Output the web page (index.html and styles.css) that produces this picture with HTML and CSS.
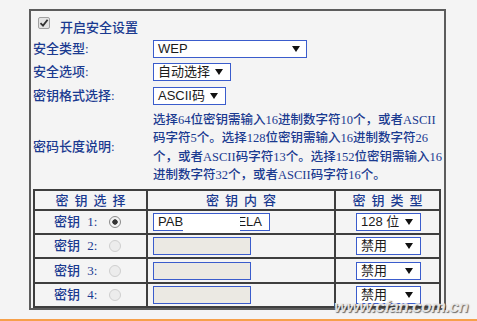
FILE: index.html
```html
<!DOCTYPE html>
<html lang="zh-CN">
<head>
<meta charset="utf-8">
<title>无线安全设置</title>
<link rel="stylesheet" href="styles.css">
</head>
<body>
<div class="frame">
  <div class="enable-row">
    <span class="checkbox"><svg width="10" height="10" viewBox="0 0 10 10"><path d="M1.5 5.2 L4 7.6 L8.6 1.8" fill="none" stroke="#333" stroke-width="1.8"/></svg></span>
    <span class="enable-label">开启安全设置</span>
  </div>
  <div class="form">
    <div class="label">安全类型:</div>
    <div class="value"><div class="select sel-type"><span>WEP</span><svg class="arrow" width="8" height="6" viewBox="0 0 8 6"><path d="M0 0 H8 L4 6 Z" fill="#111"/></svg></div></div>
    <div class="label">安全选项:</div>
    <div class="value"><div class="select sel-auto"><span>自动选择</span><svg class="arrow" width="8" height="6" viewBox="0 0 8 6"><path d="M0 0 H8 L4 6 Z" fill="#111"/></svg></div></div>
    <div class="label">密钥格式选择:</div>
    <div class="value"><div class="select sel-fmt"><span>ASCII码</span><svg class="arrow" width="8" height="6" viewBox="0 0 8 6"><path d="M0 0 H8 L4 6 Z" fill="#111"/></svg></div></div>
    <div class="label">密码长度说明:</div>
    <div class="value desc">选择64位密钥需输入16进制数字符10个，或者ASCII<br>码字符5个。选择128位密钥需输入16进制数字符26<br>个，或者ASCII码字符13个。选择152位密钥需输入16<br>进制数字符32个，或者ASCII码字符16个。</div>
  </div>
  <table class="keys">
    <tr class="head">
      <th class="c1">密 钥 选 择</th>
      <th class="c2">密 钥 内 容</th>
      <th class="c3">密 钥 类 型</th>
    </tr>
    <tr class="r">
      <td><div class="sel"><span class="kname">密钥 1:</span><span class="radio on"></span></div></td>
      <td><div class="key-input"><span>PAB</span><span>ELA</span><span class="mask"></span></div></td>
      <td><div class="select sel-kt"><span>128 位</span><svg class="arrow" width="8" height="6" viewBox="0 0 8 6"><path d="M0 0 H8 L4 6 Z" fill="#111"/></svg></div></td>
    </tr>
    <tr class="r">
      <td><div class="sel"><span class="kname">密钥 2:</span><span class="radio"></span></div></td>
      <td><div class="key-input off"></div></td>
      <td><div class="select sel-kt"><span>禁用</span><svg class="arrow" width="8" height="6" viewBox="0 0 8 6"><path d="M0 0 H8 L4 6 Z" fill="#111"/></svg></div></td>
    </tr>
    <tr class="r r3">
      <td><div class="sel"><span class="kname">密钥 3:</span><span class="radio"></span></div></td>
      <td><div class="key-input off"></div></td>
      <td><div class="select sel-kt"><span>禁用</span><svg class="arrow" width="8" height="6" viewBox="0 0 8 6"><path d="M0 0 H8 L4 6 Z" fill="#111"/></svg></div></td>
    </tr>
    <tr class="r">
      <td><div class="sel"><span class="kname">密钥 4:</span><span class="radio"></span></div></td>
      <td><div class="key-input off"></div></td>
      <td><div class="select sel-kt"><span>禁用</span><svg class="arrow" width="8" height="6" viewBox="0 0 8 6"><path d="M0 0 H8 L4 6 Z" fill="#111"/></svg></div></td>
    </tr>
  </table>
</div>
<div class="orange"></div>
<div class="watermark">www.cfan.com.cn</div>
</body>
</html>
```
FILE: styles.css
```css
* { box-sizing: border-box; }
html, body { margin: 0; padding: 0; }
body {
  width: 477px;
  height: 321px;
  background: #f4f4f4;
  font-family: "Liberation Serif", "Noto Sans CJK SC", serif;
  font-size: 13px;
  font-weight: 500;
  color: #1a3a90;
  position: relative;
  overflow: hidden;
}
.frame {
  margin: 9px 0 0 29px;
  width: 417px;
  height: 301px;
  border: 2px solid #5c5c5c;
  display: flex;
  flex-direction: column;
}
.enable-row {
  height: 26px;
  display: flex;
  align-items: flex-start;
  padding-left: 7px;
}
.checkbox {
  margin-top: 6px;
  width: 12px;
  height: 12px;
  border: 1px solid #a0a0a0;
  border-radius: 2px;
  background: #e4e4e4;
  display: flex;
  align-items: center;
  justify-content: center;
}
.enable-label {
  margin-top: 8px;
  margin-left: 10px;
  line-height: 16px;
  font-family: "Noto Sans CJK SC", sans-serif;
}
.form {
  display: grid;
  grid-template-columns: 120px 1fr;
  grid-template-rows: 23px 24px 23px 79px;
  align-items: center;
  padding-left: 2px;
}
.label { line-height: 16px; white-space: nowrap; }
.value { display: flex; align-items: center; }
.select {
  height: 18px;
  border: 1px solid #3a5ccc;
  background: #fff;
  display: flex;
  align-items: center;
  justify-content: space-between;
  padding: 0 7px 0 4px;
  font-family: "Liberation Sans", "Noto Sans CJK SC", sans-serif;
  font-size: 13px;
  font-weight: normal;
  color: #1a1a1a;
  line-height: 16px;
}
.arrow { flex: none; }
.sel-type { width: 154px; padding-right: 6px; }
.sel-auto { width: 78px; }
.sel-fmt { width: 73px; }
.desc {
  display: block;
  font-size: 12.5px;
  line-height: 18.5px;
  white-space: nowrap;
  padding-top: 2px;
}
.keys {
  margin: 3px 0 0 2px;
  width: 408px;
  border-collapse: separate;
  border-spacing: 0;
  border-top: 2px solid #3e3e3e;
  border-left: 2px solid #3e3e3e;
  table-layout: fixed;
}
.keys th, .keys td {
  border-right: 2px solid #3e3e3e;
  border-bottom: 2px solid #3e3e3e;
  padding: 0;
  font-weight: 500;
  vertical-align: middle;
}
.keys th {
  height: 20px;
  text-align: center;
  word-spacing: 3px;
  font-family: "Noto Sans CJK SC", sans-serif;
  line-height: 16px;
}
.c1 { width: 113px; }
.c2 { width: 188px; }
.keys td { height: 24px; }
.keys .r3 td { height: 25px; }
.sel {
  display: flex;
  align-items: center;
  padding-left: 19px;
}
.kname { word-spacing: 4px; line-height: 16px; }
.radio {
  margin-left: 12px;
  width: 12px;
  height: 12px;
  border-radius: 50%;
  border: 1px solid #cfcfcf;
  background: #ececec;
}
.radio.on {
  border-color: #8a8a8a;
  background: radial-gradient(circle, #333 0 2.4px, #f2f2f2 3px);
}
.key-input {
  position: relative;
  margin-left: 5px;
  width: 117px;
  height: 18px;
  border: 1px solid #3a5ccc;
  background: #fff;
  display: flex;
  align-items: center;
  justify-content: space-between;
  padding: 0 7px 0 4px;
  font-family: "Liberation Sans", sans-serif;
  font-weight: normal;
  color: #1a1a1a;
  line-height: 16px;
}
.key-input.off {
  width: 98px;
  background: #ebe9e3;
}
.mask {
  position: absolute;
  left: 29px;
  top: 0;
  width: 57px;
  height: 19px;
  background: #fff;
}
.sel-kt { margin-left: 20px; width: 65px; }
.orange {
  margin-top: 9px;
  height: 2px;
  background: #f6a04a;
}
.watermark {
  position: absolute;
  left: 334px;
  top: 297px;
  font-family: "Liberation Sans", sans-serif;
  font-weight: bold;
  font-style: italic;
  font-size: 17px;
  letter-spacing: -0.6px;
  color: rgba(238, 238, 238, 0.92);
  text-shadow: 1px 1px 1px rgba(60, 60, 60, 0.75);
}
```
